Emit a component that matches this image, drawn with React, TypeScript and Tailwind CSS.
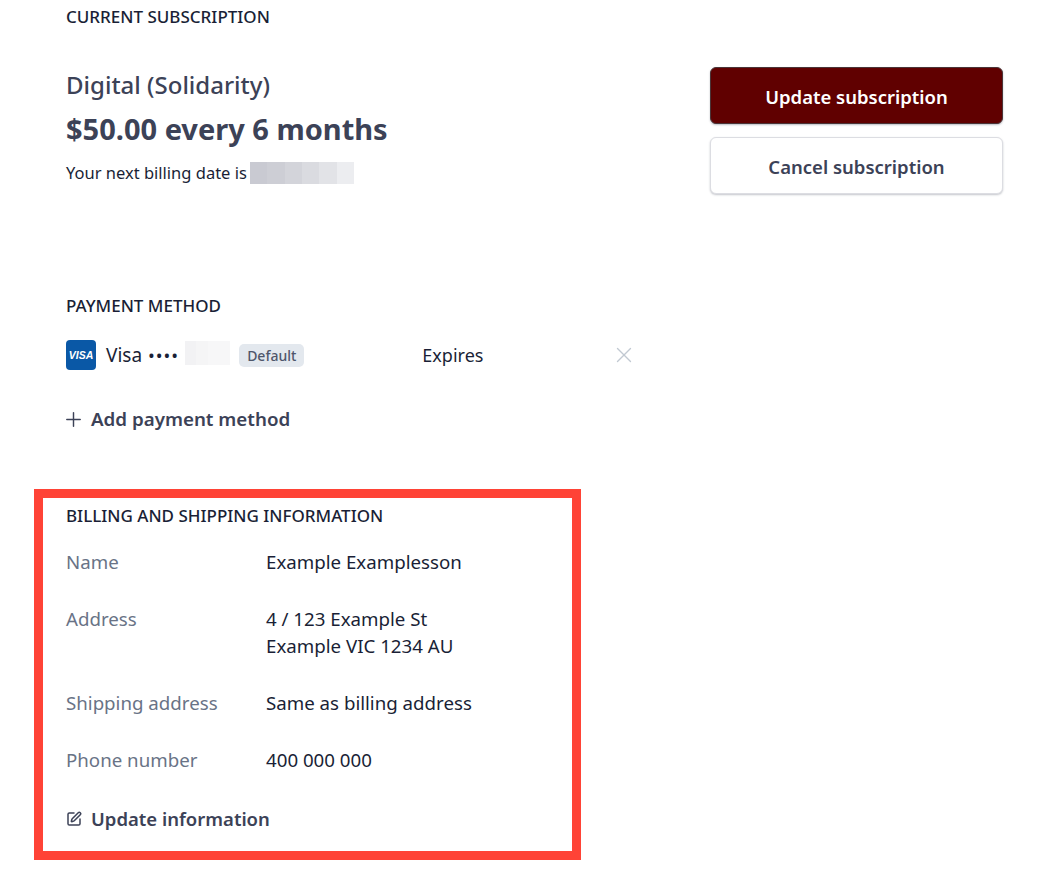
import { Plus, X, SquarePen } from 'lucide-react';

const blurBlocks = ['#c9cad2', '#cdced5', '#d3d4da', '#dadbe0', '#e2e3e7', '#ecedf0'];
const paleBlocks = ['#f2f2f4', '#f5f5f6', '#f7f7f8', '#f7f7f8'];

const billingRows = [
  { label: 'Name', value: ['Example Examplesson'] },
  { label: 'Address', value: ['4 / 123 Example St', 'Example VIC 1234 AU'] },
  { label: 'Shipping address', value: ['Same as billing address'] },
  { label: 'Phone number', value: ['400 000 000'] },
];

function SectionTitle({ children }: { children: string }) {
  return <h2 className="text-[17px] leading-[22px] font-medium text-[#1a1f36]">{children}</h2>;
}

function VisaBadge() {
  return (
    <svg width="30" height="30" viewBox="0 0 30 30" className="shrink-0">
      <rect width="30" height="30" rx="4" fill="#0a58a6" />
      <text
        x="15"
        y="19"
        textAnchor="middle"
        fontSize="10.5"
        fontWeight="800"
        fontStyle="italic"
        fill="#fff"
        fontFamily="'Liberation Sans', sans-serif"
      >
        VISA
      </text>
    </svg>
  );
}

export default function App() {
  return (
    <div className="h-[876px] w-[1061px] overflow-hidden bg-white pl-[66px] pr-[58px] pt-[6px] font-['Noto_Sans',sans-serif] text-[18.7px] text-[#1a1f36]">
      <div className="flex justify-between">
        <div>
          <SectionTitle>CURRENT SUBSCRIPTION</SectionTitle>
          <p className="mt-[39px] text-[24px] leading-[36px] font-medium text-[#3c4257]">Digital (Solidarity)</p>
          <p className="mt-[6px] text-[29px] leading-[40px] font-bold text-[#3c4257]">$50.00 every 6 months</p>
          <div className="mt-[12px] flex items-center gap-[3px]">
            <span className="text-[16.5px] leading-[24px]">Your next billing date is</span>
            <span className="flex h-[22px] w-[104px] overflow-hidden">
              {blurBlocks.map((color) => (
                <span key={color} className="h-full flex-1" style={{ backgroundColor: color }} />
              ))}
            </span>
          </div>
        </div>
        <div className="mt-[61px] flex w-[293px] flex-col gap-[13px]">
          <button
            type="button"
            className="h-[57px] rounded-md border border-[#4a3538] bg-[#600000] pt-[2px] text-[18.5px] font-semibold text-white shadow-[0_1px_2px_rgba(60,66,87,0.35)]"
          >
            Update subscription
          </button>
          <button
            type="button"
            className="h-[57px] rounded-md border border-[#dcdde2] bg-white pt-[2px] text-[18.5px] font-semibold text-[#3c4257] shadow-[0_1px_2px_rgba(60,66,87,0.3)]"
          >
            Cancel subscription
          </button>
        </div>
      </div>

      <div className="mt-[101px]">
        <SectionTitle>PAYMENT METHOD</SectionTitle>
        <div className="mt-[23px] flex h-[30px] w-[571px] items-center">
          <VisaBadge />
          <span className="ml-[10px] text-[19px] leading-[24px]">Visa</span>
          <span className="ml-[6px] text-[18px] tracking-[1px]">••••</span>
          <span className="ml-[6px] flex h-[24px] w-[45px] -translate-y-[2px] overflow-hidden">
            {paleBlocks.map((color, i) => (
              <span key={i} className="h-full flex-1" style={{ backgroundColor: color }} />
            ))}
          </span>
          <span className="ml-[9px] rounded-[5px] bg-[#e3e8ee] px-[8px] text-[14px] leading-[23px] font-medium text-[#4f566b]">
            Default
          </span>
          <span className="ml-[118px] text-[18px] leading-[24px]">Expires</span>
          <X className="ml-auto size-[26px] text-[#c1c9d2]" strokeWidth={1.25} />
        </div>
        <button type="button" className="mt-[35px] flex items-center text-[18.75px] leading-[28px] font-semibold text-[#3c4257]">
          <Plus className="-ml-[4px] mr-[6px] size-[23px]" strokeWidth={1.5} />
          Add payment method
        </button>
      </div>

      <section className="-ml-[32px] mt-[56px] h-[371px] w-[547px] border-[9px] border-[#ff4336] pl-[23px] pt-[7px]">
        <SectionTitle>BILLING AND SHIPPING INFORMATION</SectionTitle>
        <div className="mt-[21px] flex flex-col gap-[30px]">
          {billingRows.map((row) => (
            <div key={row.label} className="flex leading-[27px]">
              <span className="w-[200px] shrink-0 text-[#697386]">{row.label}</span>
              <div>
                {row.value.map((line) => (
                  <p key={line}>{line}</p>
                ))}
              </div>
            </div>
          ))}
        </div>
        <button type="button" className="mt-[32px] flex items-center text-[18.5px] leading-[28px] font-semibold text-[#3c4257]">
          <SquarePen className="mr-[9px] size-[16px]" strokeWidth={2.25} />
          Update information
        </button>
      </section>
    </div>
  );
}
